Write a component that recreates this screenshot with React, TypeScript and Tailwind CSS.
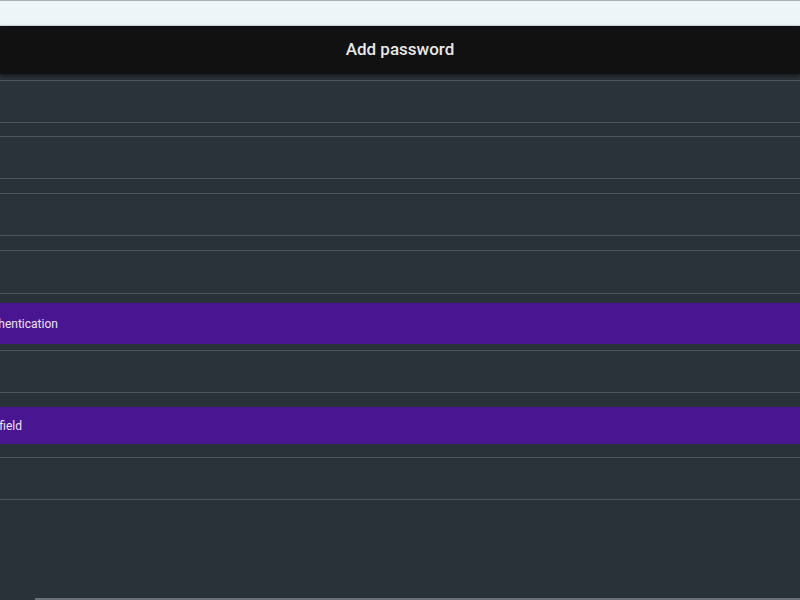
const rows: { kind: "field" | "button"; cls: string; label?: string; shift?: string }[] = [
  { kind: "field", cls: "mt-0 h-[43px]" },
  { kind: "field", cls: "mt-[13px] h-[43px]" },
  { kind: "field", cls: "mt-[14px] h-[43px]" },
  { kind: "field", cls: "mt-[14px] h-[44px]" },
  { kind: "button", cls: "mt-[9px] h-[41px]", label: "Authentication", shift: "-ml-[20px]" },
  { kind: "field", cls: "mt-[6px] h-[43px]" },
  { kind: "button", cls: "mt-[14px] h-[37px]", label: "Add field", shift: "-ml-[25px]" },
  { kind: "field", cls: "mt-[13px] h-[43px]" },
];

export default function App() {
  return (
    <div
      className="flex h-[600px] w-[800px] flex-col overflow-hidden bg-[#2a3239]"
      style={{ fontFamily: "Roboto, 'Noto Sans', sans-serif" }}
    >
      <div className="h-[26px] shrink-0 border-t border-b border-t-[#a9b0b4] border-b-[#d5dde2] bg-[#eef5f9]" />

      <div className="flex h-[48px] shrink-0 items-center justify-center bg-[#111111] shadow-[0_2px_4px_rgba(0,0,0,0.5)]">
        <h1 className="text-[17px] font-medium text-[#e8e8e8]">Add password</h1>
      </div>

      <div className="flex flex-1 flex-col pt-[6px]">
        {rows.map((row, index) =>
          row.kind === "field" ? (
            <div
              key={index}
              className={`${row.cls} shrink-0 border-y border-[#4a555c] bg-[#2b333a]`}
            />
          ) : (
            <button
              key={index}
              type="button"
              className={`${row.cls} flex shrink-0 items-center overflow-hidden bg-[#4a1590] text-left text-[12px] text-[#ece4f4]`}
            >
              <span className={`${row.shift} whitespace-nowrap`}>{row.label}</span>
            </button>
          )
        )}
      </div>

      <div className="flex h-[2px] shrink-0">
        <div className="w-[35px] bg-[#2a3239]" />
        <div className="flex-1 bg-[#6b7176]" />
      </div>
    </div>
  );
}
